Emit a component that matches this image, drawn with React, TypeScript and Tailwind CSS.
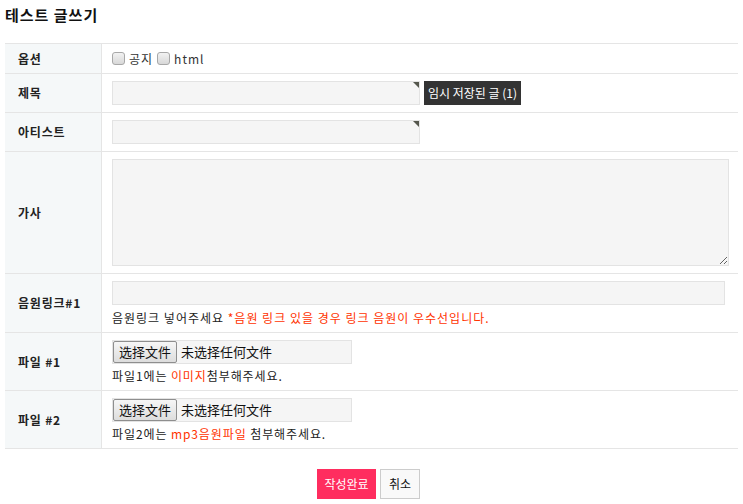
import React from "react";

const font = { fontFamily: '"Noto Sans CJK KR", "Noto Sans", sans-serif' };

function Row({ label, className, children }: { label: string; className: string; children: React.ReactNode }) {
  return (
    <div className={`flex border-b border-[#e5e5e5] ${className}`}>
      <div className="flex w-[97px] shrink-0 items-center border-r border-[#e5e5e5] bg-[#f5f8f9] pl-[13px] text-[12px] font-bold tracking-[0.8px] text-[#222]">
        {label}
      </div>
      <div className="flex min-w-0 flex-1 flex-col justify-center pl-[10px]">{children}</div>
    </div>
  );
}

function Check({ label }: { label: string }) {
  return (
    <label className="flex items-center gap-[4px]">
      <span className="h-[13px] w-[13px] rounded-[3px] border border-[#a8a8a8] bg-gradient-to-b from-[#f2f2f2] to-[#d8d8d8]" />
      <span className="tracking-[1px] text-[#333]">{label}</span>
    </label>
  );
}

function TextBox({ width }: { width: string }) {
  return (
    <div className={`relative h-[24px] ${width} border border-[#e3e3e3] bg-[#f5f5f5]`}>
      <span className="absolute right-0 top-0 h-0 w-0 border-l-[6px] border-t-[6px] border-l-transparent border-t-[#55574d]" />
    </div>
  );
}

function FileBox() {
  return (
    <div className="flex h-[24px] w-[240px] items-center border border-[#e3e3e3] bg-[#f5f5f5]">
      <button className="h-[22px] w-[64px] rounded-[2px] border border-[#8e8e8e] bg-gradient-to-b from-[#f6f6f6] to-[#dddddd] text-[13px] leading-none text-[#111]" style={{ fontFamily: '"Noto Sans CJK SC", sans-serif' }}>
        选择文件
      </button>
      <span className="ml-[4px] text-[13px] text-[#111]" style={{ fontFamily: '"Noto Sans CJK SC", sans-serif' }}>
        未选择任何文件
      </span>
    </div>
  );
}

export default function App() {
  return (
    <div className="min-h-[504px] bg-white px-[5px] text-[12px] text-[#222]" style={font}>
      <h1 className="pt-[5px] text-[15px] font-bold leading-[20px] tracking-[1px] text-[#111]">테스트 글쓰기</h1>

      <div className="mt-[18px] border-t border-[#e5e5e5]">
        <Row label="옵션" className="h-[30px]">
          <div className="flex items-center gap-[4px]">
            <Check label="공지" />
            <Check label="html" />
          </div>
        </Row>

        <Row label="제목" className="h-[39px]">
          <div className="flex items-center gap-[4px]">
            <TextBox width="w-[308px]" />
            <button className="h-[24px] bg-[#333] px-[4px] text-[12px] text-white">임시 저장된 글 (1)</button>
          </div>
        </Row>

        <Row label="아티스트" className="h-[39px]">
          <TextBox width="w-[308px]" />
        </Row>

        <Row label="가사" className="h-[122px]">
          <textarea className="h-[107px] w-[617px] border border-[#e3e3e3] bg-[#f5f5f5] outline-none" />
        </Row>

        <Row label="음원링크#1" className="h-[59px]">
          <div className="h-[24px] w-[613px] border border-[#e3e3e3] bg-[#f5f5f5]" />
          <p className="mt-[5px] leading-[16px] tracking-[1px]">
            음원링크 넣어주세요 <span className="text-[#ff3300]">*음원 링크 있을 경우 링크 음원이 우수선입니다.</span>
          </p>
        </Row>

        <Row label="파일 #1" className="h-[58px]">
          <FileBox />
          <p className="mt-[4px] leading-[16px] tracking-[0.9px]">
            파일1에는 <span className="text-[#ff3300]">이미지</span>첨부해주세요.
          </p>
        </Row>

        <Row label="파일 #2" className="h-[58px]">
          <FileBox />
          <p className="mt-[4px] leading-[16px] tracking-[0.9px]">
            파일2에는 <span className="text-[#ff3300]">mp3음원파일</span> 첨부해주세요.
          </p>
        </Row>
      </div>

      <div className="mt-[20px] flex justify-center gap-[4px] pr-[6px]">
        <button className="h-[30px] w-[59px] bg-[#ff2d5f] text-[12px] text-white">작성완료</button>
        <button className="h-[30px] w-[40px] border border-[#cccccc] bg-[#f9f9f9] text-[12px] text-[#111]">취소</button>
      </div>
    </div>
  );
}
